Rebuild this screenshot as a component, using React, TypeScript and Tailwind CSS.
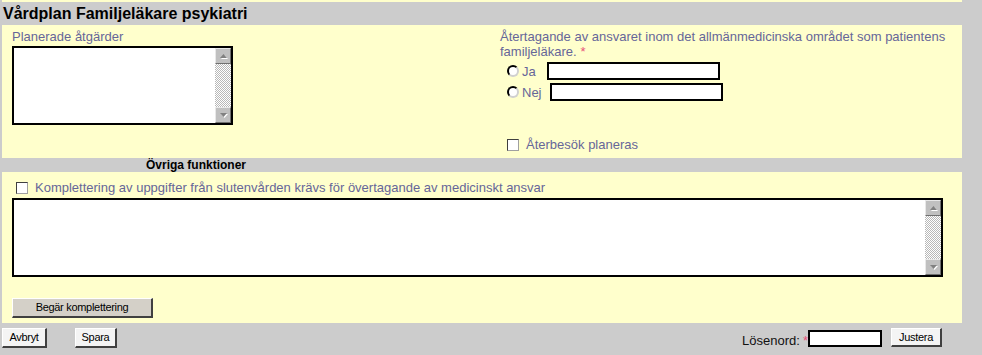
import React from "react";

function ScrollBtn({ up }: { up?: boolean }) {
  return (
    <div className="w-[16px] h-[16px] shrink-0 bg-[#c0c0c0] border border-t-[#e8e8e8] border-l-[#e8e8e8] border-r-[#707070] border-b-[#707070] flex items-center justify-center">
      <svg width="9" height="6" viewBox="0 0 9 6">
        {up ? (
          <>
            <polygon points="1,5 8,5 4.5,1" fill="#ffffff" transform="translate(1,1)" />
            <polygon points="1,5 8,5 4.5,1" fill="#808080" />
          </>
        ) : (
          <>
            <polygon points="1,1 8,1 4.5,5" fill="#ffffff" transform="translate(1,1)" />
            <polygon points="1,1 8,1 4.5,5" fill="#808080" />
          </>
        )}
      </svg>
    </div>
  );
}

function TextBox({ w }: { w: string }) {
  return (
    <div className={`${w} h-[79px] border-2 border-black bg-white flex justify-end`}>
      <div className="w-[16px] h-full flex flex-col">
        <ScrollBtn up />
        <div className="flex-1 bg-[repeating-conic-gradient(#b8b8b8_0%_25%,#ffffff_0%_50%)] bg-[length:2px_2px]" />
        <ScrollBtn />
      </div>
    </div>
  );
}

function Radio() {
  return (
    <div className="w-[12px] h-[12px] rounded-full bg-white border-2 border-t-black border-l-black border-r-[#d0d0d0] border-b-[#d0d0d0]" />
  );
}

function Checkbox() {
  return (
    <div className="w-[12px] h-[12px] bg-white border border-t-[#404040] border-l-[#404040] border-r-[#a0a0a0] border-b-[#a0a0a0] shrink-0" />
  );
}

function Btn({ label, cls }: { label: string; cls: string }) {
  return (
    <div
      className={`${cls} flex items-center justify-center text-[11px] tracking-[-0.3px] text-black border-t border-l border-t-white border-l-white border-r-2 border-b-2 border-r-[#404040] border-b-[#404040] leading-none`}
    >
      {label}
    </div>
  );
}

export default function App() {
  return (
    <div className="w-[982px] h-[355px] bg-[#cccccc] pl-[2px] overflow-hidden font-['Liberation_Sans',Arial,sans-serif]">
      <div className="w-[960px]">
        <div className="h-[2px] bg-[#ffffcc]" />
        <div className="h-[23px] flex items-center pl-[1px] text-[16px] font-bold text-black leading-none">
          Vårdplan Familjeläkare psykiatri
        </div>

        {/* Section 1 */}
        <div className="h-[133px] bg-[#ffffcc] flex">
          <div className="w-[498px] shrink-0 pl-[10px] pt-[4px]">
            <div className="text-[13px] leading-[15px] text-[#666699]">Planerade åtgärder</div>
            <div className="mt-[2px]">
              <TextBox w="w-[221px]" />
            </div>
          </div>
          <div className="w-[455px] shrink-0 pt-[4px] text-[13px] text-[#666699]">
            <div className="leading-[15px]">
              Återtagande av ansvaret inom det allmänmedicinska området som patientens
            </div>
            <div className="leading-[15px] flex">
              <span>familjeläkare.</span>
              <span className="ml-[4px] text-[#e8507a]">*</span>
            </div>
            <div className="mt-[3px] h-[18px] flex items-center">
              <div className="ml-[7px]">
                <Radio />
              </div>
              <span className="ml-[3px] leading-none">Ja</span>
              <div className="ml-[11px] w-[173px] h-[18px] bg-white border-2 border-black" />
            </div>
            <div className="mt-[3px] h-[18px] flex items-center">
              <div className="ml-[7px]">
                <Radio />
              </div>
              <span className="ml-[3px] leading-none">Nej</span>
              <div className="ml-[8px] w-[173px] h-[18px] bg-white border-2 border-black" />
            </div>
            <div className="mt-[36px] h-[15px] flex items-center">
              <div className="ml-[7px]">
                <Checkbox />
              </div>
              <span className="ml-[7px] leading-none">Återbesök planeras</span>
            </div>
          </div>
        </div>

        {/* Övriga funktioner band */}
        <div className="h-[14px] pl-[144px] text-[12px] leading-[14px] font-bold text-black">
          Övriga funktioner
        </div>

        {/* Section 2 */}
        <div className="h-[151px] bg-[#ffffcc] pt-[8px]">
          <div className="h-[15px] flex items-center pl-[14px] text-[13px] text-[#666699]">
            <Checkbox />
            <span className="ml-[7px] leading-none">
              Komplettering av uppgifter från slutenvården krävs för övertagande av medicinskt ansvar
            </span>
          </div>
          <div className="mt-[3px] ml-[10px]">
            <TextBox w="w-[931px]" />
          </div>
          <div className="mt-[21px] ml-[10px]">
            <Btn label="Begär komplettering" cls="w-[141px] h-[20px] bg-[#d4d0c8]" />
          </div>
        </div>

        {/* Bottom bar */}
        <div className="h-[32px] pt-[5px] flex items-start">
          <Btn label="Avbryt" cls="w-[45px] h-[20px] bg-[#f4f4f4]" />
          <div className="ml-[28px]">
            <Btn label="Spara" cls="w-[42px] h-[20px] bg-[#f4f4f4]" />
          </div>
          <div className="ml-auto pr-[20px] flex items-start">
            <div className="mt-[2px] h-[17px] flex items-end text-[13px] text-[#111] leading-none">
              <span>Lösenord:</span>
              <span className="ml-[3px] text-[#e8507a]">*</span>
            </div>
            <div className="mt-[2px] ml-0 w-[74px] h-[17px] bg-white border-2 border-black" />
            <div className="ml-[9px]">
              <Btn label="Justera" cls="w-[51px] h-[19px] bg-[#f4f4f4]" />
            </div>
          </div>
        </div>
      </div>
    </div>
  );
}
